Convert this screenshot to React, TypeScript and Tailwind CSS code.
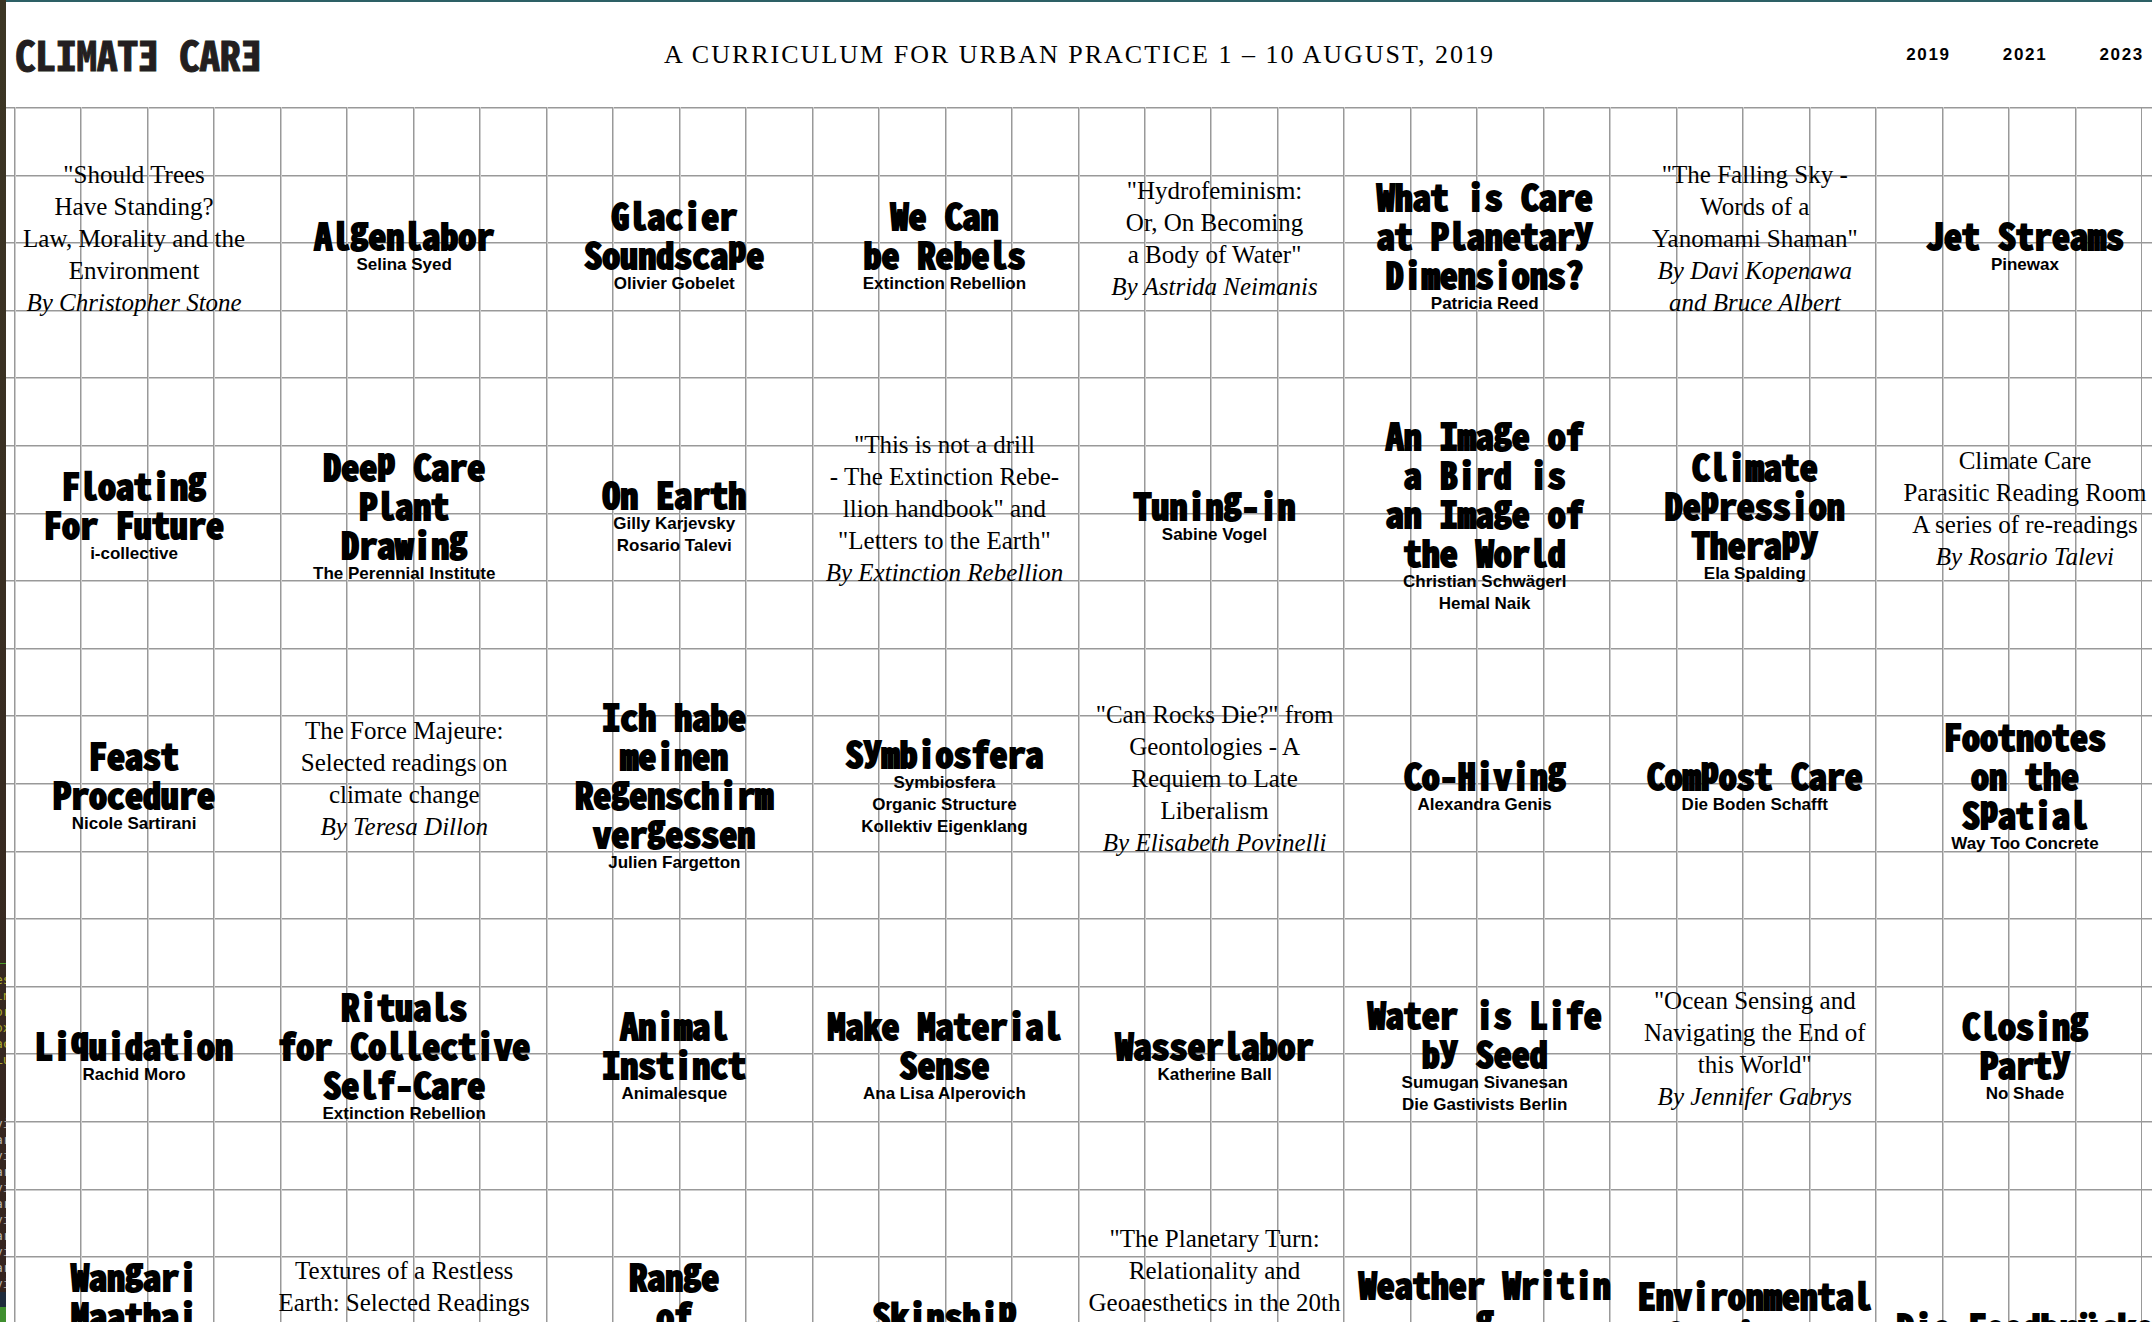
import React from "react";

type Item = { title?: string[]; by: string[]; text?: string[] };

const p = (title: string, ...by: string[]): Item => ({ title: title.split("|"), by });
const r = (text: string, ...by: string[]): Item => ({ text: text.split("|"), by });

const items: Item[] = [
  r('"Should Trees|Have Standing?|Law, Morality and the|Environment', "By Christopher Stone"),
  p("Algenlabor", "Selina Syed"),
  p("Glacier|Soundscape", "Olivier Gobelet"),
  p("We Can|be Rebels", "Extinction Rebellion"),
  r('"Hydrofeminism:|Or, On Becoming|a Body of Water"', "By Astrida Neimanis"),
  p("What is Care|at Planetary|Dimensions?", "Patricia Reed"),
  r('"The Falling Sky -|Words of a|Yanomami Shaman"', "By Davi Kopenawa", "and Bruce Albert"),
  p("Jet Streams", "Pinewax"),

  p("Floating|For Future", "i-collective"),
  p("Deep Care|Plant|Drawing", "The Perennial Institute"),
  p("On Earth", "Gilly Karjevsky", "Rosario Talevi"),
  r('"This is not a drill|- The Extinction Rebe-|llion handbook" and|"Letters to the Earth"', "By Extinction Rebellion"),
  p("Tuning-in", "Sabine Vogel"),
  p("An Image of|a Bird is|an Image of|the World", "Christian Schwägerl", "Hemal Naik"),
  p("Climate|Depression|Therapy", "Ela Spalding"),
  r("Climate Care|Parasitic Reading Room|A series of re-readings", "By Rosario Talevi"),

  p("Feast|Procedure", "Nicole Sartirani"),
  r("The Force Majeure:|Selected readings on|climate change", "By Teresa Dillon"),
  p("Ich habe|meinen|Regenschirm|vergessen", "Julien Fargetton"),
  p("Symbiosfera", "Symbiosfera", "Organic Structure", "Kollektiv Eigenklang"),
  r('"Can Rocks Die?" from|Geontologies - A|Requiem to Late|Liberalism', "By Elisabeth Povinelli"),
  p("Co-Hiving", "Alexandra Genis"),
  p("Compost Care", "Die Boden Schafft"),
  p("Footnotes|on the|Spatial", "Way Too Concrete"),

  p("Liquidation", "Rachid Moro"),
  p("Rituals|for Collective|Self-Care", "Extinction Rebellion"),
  p("Animal|Instinct", "Animalesque"),
  p("Make Material|Sense", "Ana Lisa Alperovich"),
  p("Wasserlabor", "Katherine Ball"),
  p("Water is Life|by Seed", "Sumugan Sivanesan", "Die Gastivists Berlin"),
  r('"Ocean Sensing and|Navigating the End of|this World"', "By Jennifer Gabrys"),
  p("Closing|Party", "No Shade"),

  p("Wangari|Maathai|Park", "Wangari Maathai"),
  r("Textures of a Restless|Earth: Selected Readings|on climate", "By Teresa Dillon"),
  p("Range|of|Motion", "Extinction"),
  p("Skinship", "Skinship"),
  r('"The Planetary Turn:|Relationality and|Geoaesthetics in the 20th|Century"', "By Amy J. Elias", "and Christian Moraru"),
  p("Weather Writin|g", "Weather", "Writing"),
  p("Environmental|Commitment", "Environmental"),
  p("Die Foodbrücke"),
];

const yellowLines = ["es", "in", "or", "ox", "ac", "Lu"];
const whiteLines = ["vi", "ar", "vi", "ar", "vi", "ar", "vi", "ar", "vi", "ar", "vi"];

function Lines({ lines }: { lines: string[] }) {
  return (
    <>
      {lines.map((l, i) => (
        <span key={i} className="block whitespace-nowrap">{l}</span>
      ))}
    </>
  );
}

function DisplayLine({ text }: { text: string }) {
  return (
    <span className="block whitespace-nowrap">
      {text.split(/([gpqy])/).map((part, i) =>
        i % 2 ? <span key={i} className="align-[7px] leading-0">{part}</span> : part
      )}
    </span>
  );
}

function Cell({ item }: { item: Item }) {
  if (item.text) {
    return (
      <a href="#reading" className="flex min-w-0 flex-col items-center justify-center pb-1.5 text-center font-['Liberation_Serif',serif] text-[25px] leading-8">
        <p><Lines lines={item.text} /></p>
        <p className="italic"><Lines lines={item.by} /></p>
      </a>
    );
  }
  return (
    <a href="#project" className="flex min-w-0 flex-col items-center justify-center pt-1.5 text-center">
      <h2 className="font-['Noto_Sans_Mono_CJK_JP','DejaVu_Sans_Mono',monospace] text-[36px] leading-[39px] font-bold [-webkit-text-stroke:2px_black]">
        {item.title!.map((l) => <DisplayLine key={l} text={l} />)}
      </h2>
      <p className="font-['Liberation_Sans',sans-serif] text-[17px] leading-[22px] font-bold">
        <Lines lines={item.by} />
      </p>
    </a>
  );
}

/* The sliver of a terminal window that shows behind the browser. */
function Backdrop() {
  return (
    <div aria-hidden="true" className="flex w-[6px] shrink-0 flex-col overflow-hidden bg-linear-to-b from-[#3c3624] to-[#35241f] font-['DejaVu_Sans_Mono',monospace] text-[13px] leading-4">
      <div className="h-[963px] shrink-0" />
      <div className="h-px shrink-0 bg-[#4c9a2a]" />
      <div className="-ml-[5px] pt-2 text-[#a9a52c]"><Lines lines={yellowLines} /></div>
      <div className="-ml-[5px] pt-12 text-[#b5b0ab]"><Lines lines={whiteLines} /></div>
      <div className="h-[15px] shrink-0 bg-[#1f2c3d]" />
      <div className="grow bg-[#3f8f2f]" />
    </div>
  );
}

export default function App() {
  return (
    <div className="flex h-screen overflow-hidden bg-white text-black">
      <Backdrop />
      <div className="flex min-w-0 grow flex-col border-t-2 border-[#2d6065]">
        <header className="grid h-[105px] shrink-0 grid-cols-[1fr_auto_1fr] items-center pr-2 pl-[9px]">
          <a href="#home" className="pb-1 font-['Noto_Sans_Mono_CJK_JP','DejaVu_Sans_Mono',monospace] text-[41px] leading-10 font-bold text-[#231f20] [-webkit-text-stroke:1px_#231f20]">
            CLIMAT<span className="inline-block -scale-x-100">E</span> CAR<span className="inline-block -scale-x-100">E</span>
          </a>
          <p className="text-center font-['Liberation_Serif',serif] text-[26px] tracking-[2px] whitespace-nowrap">A CURRICULUM FOR URBAN PRACTICE 1 – 10 AUGUST, 2019</p>
          <nav className="flex justify-end gap-[52px] font-['Liberation_Sans',sans-serif] text-[17px] font-bold tracking-widest">
            <a href="#2019">2019</a>
            <a href="#2021">2021</a>
            <a href="#2023">2023</a>
          </nav>
        </header>
        <main className="relative shrink-0 pb-0.5">
          <div aria-hidden="true" className="absolute inset-0 grid grid-rows-20">
            {Array.from({ length: 20 }, (_, i) => (
              <div key={i} className="border-t border-[#999] shadow-[inset_0_1px_#ccc]" />
            ))}
          </div>
          <div aria-hidden="true" className="absolute inset-0 mr-[10px] ml-2 grid grid-cols-32 border-r border-[#999]">
            {Array.from({ length: 32 }, (_, i) => (
              <div key={i} className="border-l border-[#999] shadow-[inset_1px_0_#ccc]" />
            ))}
          </div>
          <div className="relative -mr-2 -ml-[7px] grid auto-rows-[270px] grid-cols-8">
            {items.map((item, i) => (
              <Cell key={i} item={item} />
            ))}
          </div>
        </main>
      </div>
    </div>
  );
}
